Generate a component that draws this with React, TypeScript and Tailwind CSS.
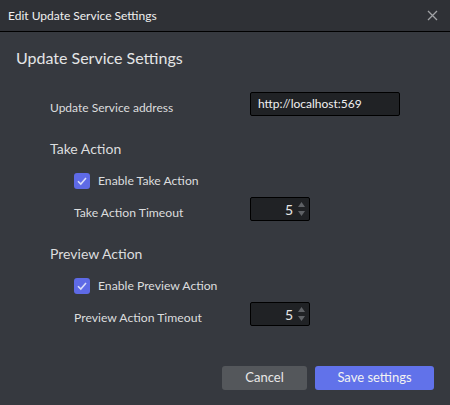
import React from "react";

const font = { fontFamily: 'Lato, "Noto Sans", sans-serif' };

function Check() {
  return (
    <div className="w-[16px] h-[16px] rounded-[3px] bg-[#5e6ae6] flex items-center justify-center">
      <svg width="12" height="12" viewBox="0 0 12 12">
        <path d="M2 6.2 L4.8 9 L10 3" fill="none" stroke="#d8dcf8" strokeWidth="1.6" />
      </svg>
    </div>
  );
}

function Spin({ value }: { value: string }) {
  return (
    <div className="w-[60px] h-[24px] bg-[#202225] border border-black rounded-[2px] flex items-center justify-end pr-[4px]">
      <span className="text-[14px] text-[#e8e8e8] mr-[5px]">{value}</span>
      <div className="flex flex-col gap-[4px]">
        <svg width="7" height="5" viewBox="0 0 7 5"><path d="M0 5 L3.5 0 L7 5 Z" fill="#5f6266" /></svg>
        <svg width="7" height="5" viewBox="0 0 7 5"><path d="M0 0 L3.5 5 L7 0 Z" fill="#5f6266" /></svg>
      </div>
    </div>
  );
}

export default function App() {
  return (
    <div className="w-[450px] h-[405px] bg-[#36393f] flex flex-col text-[#dcddde]" style={font}>
      <div className="h-[32px] bg-[#2f3136] border-b border-black flex items-center justify-between pl-[8px] pr-[12px]">
        <span className="text-[12px] text-[#f0f0f0]">Edit Update Service Settings</span>
        <svg width="11" height="11" viewBox="0 0 11 11">
          <path d="M1 1 L10 10 M10 1 L1 10" stroke="#a0a2a5" strokeWidth="1.3" />
        </svg>
      </div>
      <div className="mt-[14px] pl-[16px] h-[24px] flex items-center text-[16px] text-[#e4e5e6]">
        Update Service Settings
      </div>
      <div className="pl-[50px] flex flex-col">
        <div className="mt-[22px] h-[24px] flex items-center">
          <span className="w-[200px] text-[12px] pt-[8px]">Update Service address</span>
          <div className="w-[150px] h-[24px] bg-[#202225] border border-black rounded-[2px] flex items-center pl-[7px] text-[12px] text-[#f0f0f0]">
            http://localhost:569
          </div>
        </div>
        <div className="mt-[22px] h-[20px] flex items-center text-[14px]">Take Action</div>
        <div className="mt-[15px] h-[16px] flex items-center pl-[24px] gap-[8px]">
          <Check />
          <span className="text-[12.2px]">Enable Take Action</span>
        </div>
        <div className="mt-[8px] h-[24px] flex items-center pl-[24px]">
          <span className="w-[176px] text-[12.2px] pt-[9px]">Take Action Timeout</span>
          <Spin value="5" />
        </div>
        <div className="mt-[22px] h-[20px] flex items-center text-[14px]">Preview Action</div>
        <div className="mt-[15px] h-[16px] flex items-center pl-[24px] gap-[8px]">
          <Check />
          <span className="text-[12.2px]">Enable Preview Action</span>
        </div>
        <div className="mt-[8px] h-[24px] flex items-center pl-[24px]">
          <span className="w-[176px] text-[12.2px] pt-[8px]">Preview Action Timeout</span>
          <Spin value="5" />
        </div>
      </div>
      <div className="mt-[40px] flex justify-end gap-[8px] pr-[16px]">
        <button className="w-[85px] h-[24px] rounded-[3px] bg-[#54575b] text-[13px] text-[#e8e8e8]">Cancel</button>
        <button className="w-[119px] h-[24px] rounded-[3px] bg-[#6172ea] text-[13px] text-[#f2f2f2]">Save settings</button>
      </div>
    </div>
  );
}
